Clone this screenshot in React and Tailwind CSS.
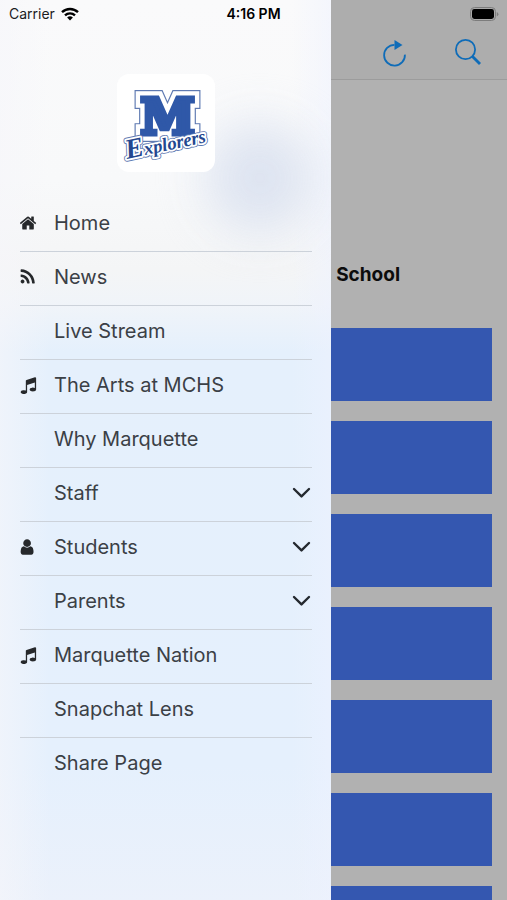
import React from 'react';

const HOME = "M1472 992v480q0 26-19 45t-45 19h-384v-384h-256v384h-384q-26 0-45-19t-19-45v-480q0-1 .5-3t.5-3l575-474 575 474q1 2 1 6zm223-69l-62 74q-8 9-21 11h-3q-13 0-21-7l-692-577-692 577q-12 8-24 7-13-2-21-11l-62-74q-8-10-7-23.5t11-21.5l719-599q32-26 76-26t76 26l244 204v-195q0-14 9-23t23-9h192q14 0 23 9t9 23v408l219 182q10 8 11 21.5t-7 23.5z";
const RSS = "M576 1344q0 80-56 136t-136 56-136-56-56-136 56-136 136-56 136 56 56 136zm512 123q2 28-17 48-18 21-47 21h-135q-25 0-43-16.5t-20-41.5q-22-229-184.5-391.5t-391.5-184.5q-25-2-41.5-20t-16.5-43v-135q0-29 21-47 17-17 43-17h5q160 13 306 80.5t259 181.5q114 113 181.5 259t80.5 306zm512 2q2 27-18 47-18 20-46 20h-143q-26 0-44.5-17.5t-19.5-42.5q-12-215-101-408.5t-231.5-336-336-231.5-408.5-102q-25-1-42.5-19.5t-17.5-43.5v-143q0-28 20-46 18-18 44-18h3q262 13 501.5 120t425.5 294q187 186 294 425.5t120 501.5z";
const MUSIC = "M1664 224v1120q0 50-34 89t-86 60.5-103.5 32-96.5 10.5-96.5-10.5-103.5-32-86-60.5-34-89 34-89 86-60.5 103.5-32 96.5-10.5q105 0 192 39v-537l-768 237v709q0 50-34 89t-86 60.5-103.5 32-96.5 10.5-96.5-10.5-103.5-32-86-60.5-34-89 34-89 86-60.5 103.5-32 96.5-10.5q105 0 192 39v-967q0-31 19-56.5t49-35.5l832-256q12-4 28-4 40 0 68 28t28 68z";
const USER = "M1536 1399q0 109-62.5 187t-150.5 78h-854q-88 0-150.5-78t-62.5-187q0-85 8.5-160.5t31.5-152 58.5-131 94-89 134.5-34.5q131 128 313 128t313-128q76 0 134.5 34.5t94 89 58.5 131 31.5 152 8.5 160.5zm-256-887q0 159-112.5 271.5t-271.5 112.5-271.5-112.5-112.5-271.5 112.5-271.5 271.5-112.5 271.5 112.5 112.5 271.5z";

const menuItems = [
    { label: 'Home', icon: HOME, left: 97 },
    { label: 'News', icon: RSS, left: 130 },
    { label: 'Live Stream' },
    { label: 'The Arts at MCHS', icon: MUSIC, left: 60 },
    { label: 'Why Marquette' },
    { label: 'Staff', expandable: true },
    { label: 'Students', icon: USER, left: 190, expandable: true },
    { label: 'Parents', expandable: true },
    { label: 'Marquette Nation', icon: MUSIC, left: 60 },
    { label: 'Snapchat Lens' },
    { label: 'Share Page' },
];

const tiles = [1, 2, 3, 4, 5, 6, 7];

function StatusBar() {
    return (
        <div className="relative z-20 grid h-7 grid-cols-3 items-center px-2 text-sm text-[#1c1c1e]">
            <div className="flex items-center gap-1.5 pl-px">
                <span>Carrier</span>
                <svg className="h-3.5 w-[18px]" viewBox="0 0 18 14" fill="none" stroke="#000" strokeWidth="2.4">
                    <path d="M1 5.2a11.6 11.6 0 0 1 16 0" />
                    <path d="M4 8.4a7.3 7.3 0 0 1 10 0" />
                    <path d="M9 13.6 6.1 10.6a4.2 4.2 0 0 1 5.8 0z" fill="#000" stroke="none" />
                </svg>
            </div>
            <span className="text-center font-semibold text-black">4:16 PM</span>
            <svg className="h-3.5 w-[30px] justify-self-end" viewBox="0 0 30 14">
                <rect x="1.5" y=".5" width="25" height="13" rx="4" fill="#aaa" stroke="#7c7c7c" />
                <rect x="3" y="2" width="22" height="10" rx="2.4" fill="#000" />
                <path d="M27.8 5v4.4q1.6-.7 1.6-2.2t-1.6-2.2z" fill="#7c7c7c" />
            </svg>
        </div>
    );
}

function Logo() {
    return (
        <svg className="size-[98px] rounded-xl bg-white" viewBox="0 0 98 98" role="img" aria-label="M Explorers">
            <defs>
                <text id="logo-m" x="50.5" y="59.5" textAnchor="middle" fontFamily="DejaVu Serif" fontWeight="700" fontSize="49">M</text>
                <text id="logo-name" x="10" y="85" transform="rotate(-12 10 85)" fontFamily="Liberation Serif" fontStyle="italic" fontWeight="700" fontSize="18.5">
                    <tspan fontSize="28">E</tspan>xplorers
                </text>
            </defs>
            <use href="#logo-m" fill="#5f7ab2" stroke="#5f7ab2" strokeWidth="16" />
            <use href="#logo-m" fill="#fff" stroke="#fff" strokeWidth="13.6" />
            <use href="#logo-m" fill="#2f58a8" stroke="#2f58a8" strokeWidth="5" />
            <g strokeLinejoin="round">
                <use href="#logo-name" fill="#5f7ab2" stroke="#5f7ab2" strokeWidth="5.4" />
                <use href="#logo-name" fill="#fff" stroke="#fff" strokeWidth="3.6" />
                <use href="#logo-name" fill="#23478f" />
            </g>
        </svg>
    );
}

function MenuRow({ item, last }) {
    return (
        <li className={last ? '' : 'border-b border-[#ccd2da]'}>
            <button type="button" className="flex h-[53px] w-full items-center gap-4 pb-1 text-left">
                <span className="w-[18px] shrink-0">
                    {item.icon && (
                        <svg className="size-[18px] fill-[#26282b]" viewBox={`${item.left} 0 1792 1792`}>
                            <path d={item.icon} />
                        </svg>
                    )}
                </span>
                <span className="flex-1">{item.label}</span>
                {item.expandable && (
                    <svg className="h-3 w-5" viewBox="0 0 20 12" fill="none" stroke="#24292f" strokeWidth="2.4" strokeLinecap="round" strokeLinejoin="round">
                        <path d="M2 2 9.5 9.4 17 2" />
                    </svg>
                )}
            </button>
        </li>
    );
}

function Drawer() {
    return (
        <aside className="absolute inset-y-0 left-0 z-10 w-[331px] max-w-full overflow-hidden bg-[linear-gradient(to_bottom,#fafafb_0%,#f8f9fa_20%,#f4f5f6_30%,#f0f4f9_34%,#e5f0fc_39%,#e5f0fd_85%,#ebf1fb_100%)]">
            <div className="absolute inset-0 bg-[linear-gradient(to_right,rgba(246,246,250,0.6)_0%,transparent_15%,transparent_88%,rgba(238,242,255,0.5)_100%)]" />
            <div className="absolute top-[123px] left-[205px] size-[110px] rounded-full bg-[#dbe2f0] opacity-90 blur-xl" />
            <div className="relative px-5 pt-[74px]">
                <div className="mb-[26px] flex justify-center pl-px">
                    <Logo />
                </div>
                <nav>
                    <ul className="-mr-px text-xl text-[#3b4046]">
                        {menuItems.map((item, i) => (
                            <MenuRow key={item.label} item={item} last={i === menuItems.length - 1} />
                        ))}
                    </ul>
                </nav>
            </div>
        </aside>
    );
}

function App() {
    return (
        <div className="relative h-screen overflow-hidden bg-[#b1b1b1] font-[Inter,sans-serif]">
            <header className="border-b border-[#9c9c9c] bg-[#adadad]">
                <StatusBar />
                <div className="flex h-[51px] items-center justify-end gap-[46px] pr-[25px] pb-0.5">
                    <button type="button" aria-label="Refresh">
                        <svg className="h-7 w-7" viewBox="0 0 28 28" fill="none" stroke="#0f6cb8" strokeWidth="1.8">
                            <path d="M14.5 5.8A10.4 10.4 0 1 0 24.9 15.6" />
                            <path d="M14.5 1v10L22.5 6z" fill="#0f6cb8" stroke="none" />
                        </svg>
                    </button>
                    <button type="button" aria-label="Search">
                        <svg className="h-7 w-7" viewBox="0 0 28 28" fill="none" stroke="#0f6cb8" strokeWidth="1.8">
                            <circle cx="11.5" cy="10.5" r="9.6" />
                            <path d="M18.5 17.5 26 25" strokeWidth="2.8" />
                        </svg>
                    </button>
                </div>
            </header>

            <main className="px-[15px] pt-[181px]">
                <h1 className="text-center text-[19px] leading-7 font-bold text-[#0c0c0c]">Marquette Catholic High School</h1>
                <div className="mt-[39px] flex flex-col gap-5">
                    {tiles.map((tile) => (
                        <div key={tile} className="h-[73px] bg-[#3457b0]" />
                    ))}
                </div>
            </main>

            <Drawer />
        </div>
    );
}

export default App;
